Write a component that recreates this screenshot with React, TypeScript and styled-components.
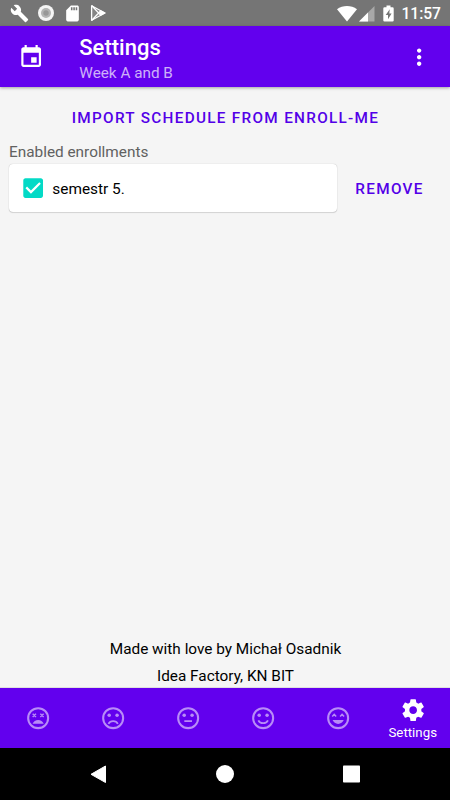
import React from "react";
import styled, { createGlobalStyle } from "styled-components";

const PURPLE = "#6200ee";

const GlobalStyle = createGlobalStyle`
  * { box-sizing: border-box; }
  body { margin: 0; font-family: Roboto, sans-serif; background: #f5f5f5; }
  svg { display: block; flex: none; }
  button { border: 0; background: none; font-family: inherit; padding: 0; }
`;

const Screen = styled.div`
  width: 450px;
  height: 800px;
  display: flex;
  flex-direction: column;
  background: #f5f5f5;
  overflow: hidden;
`;

const StatusBar = styled.div`
  height: 26px;
  flex: none;
  display: flex;
  align-items: center;
  justify-content: space-between;
  background: #757575;
  color: #fff;
  padding: 0 9px 0 10px;
`;

const StatusGroup = styled.div<{ $gap: number }>`
  display: flex;
  align-items: center;
  gap: ${(p) => p.$gap}px;
`;

const Clock = styled.span`
  font-size: 15.6px;
  font-weight: 500;
  line-height: 23px;
  padding: 2px 0 0 2px;
  white-space: nowrap;
`;

const AppBar = styled.header`
  height: 61px;
  flex: none;
  display: flex;
  align-items: center;
  background: ${PURPLE};
  color: #fff;
  padding: 1px 17.5px 0 18px;
  box-shadow: 0 1px 3px rgba(0, 0, 0, 0.35);
  z-index: 1;
`;

const Titles = styled.div`
  flex: 1;
  padding: 3px 0 0 35px;
`;

const Title = styled.h1`
  margin: 0;
  font-size: 22px;
  font-weight: 500;
  line-height: 26px;
`;

const Subtitle = styled.div`
  font-size: 15.3px;
  line-height: 20px;
  padding-top: 2px;
  color: rgba(255, 255, 255, 0.7);
`;

const Content = styled.main`
  flex: 1;
  display: flex;
  flex-direction: column;
  padding: 11px 8px 0 9px;
`;

const TextButton = styled.button<{ $width?: number }>`
  height: 40px;
  width: ${(p) => (p.$width ? `${p.$width}px` : "100%")};
  font-size: 15.3px;
  font-weight: 500;
  letter-spacing: 1.3px;
  color: #5300e8;
  white-space: nowrap;
  text-transform: uppercase;
`;

const SectionLabel = styled.div`
  font-size: 15.35px;
  line-height: 22px;
  margin-top: 3px;
  color: #616161;
`;

const EnrollmentRow = styled.div`
  display: flex;
  align-items: center;
  margin-top: 1px;
`;

const Card = styled.div`
  width: 328px;
  height: 48px;
  display: flex;
  align-items: center;
  gap: 6px;
  padding: 1px 0 0 11px;
  background: #fff;
  border-radius: 4px;
  box-shadow: 0 0 1px rgba(0, 0, 0, 0.3), 0 1px 1px rgba(0, 0, 0, 0.12);
  font-size: 15.4px;
  color: #000;
`;

const RemoveSlot = styled.div`
  padding-top: 2px;
`;

const Credits = styled.footer`
  margin-top: auto;
  margin-bottom: -1px;
  text-align: center;
  font-size: 15.35px;
  line-height: 26.5px;
  color: #000;
`;

const BottomNav = styled.nav`
  height: 60px;
  flex: none;
  display: grid;
  grid-template-columns: repeat(6, 1fr);
  background: ${PURPLE};
  box-shadow: 0 0 1px rgba(0, 0, 0, 0.5);
`;

const NavItem = styled.div<{ $active?: boolean }>`
  display: flex;
  flex-direction: column;
  align-items: center;
  justify-content: center;
  padding: ${(p) => (p.$active ? "3px 0 0 0.5px" : "0 0 0 0.5px")};
  color: ${(p) => (p.$active ? "#fff" : "rgba(255, 255, 255, 0.6)")};
  font-size: 13.3px;
  line-height: 19px;
`;

const SystemBar = styled.div`
  height: 52px;
  flex: none;
  display: flex;
  align-items: center;
  justify-content: space-between;
  padding: 0 86px 0 85px;
  background: #000;
`;

type IconProps = { d: string; size?: number };

const Icon = ({ d, size = 26.3 }: IconProps) => (
  <svg width={size} height={size} viewBox="0 0 24 24" fill="currentColor">
    <path fillRule="evenodd" d={d} />
  </svg>
);

const WRENCH =
  "M22.7 19l-9.1-9.1c.9-2.3.4-5-1.5-6.9-2-2-5-2.4-7.4-1.3L9 6 6 9 1.6 4.7C.4 7.1.9 10.1 2.9 12.1c1.9 1.9 4.6 2.4 6.9 1.5l9.1 9.1c.4.4 1 .4 1.4 0l2.3-2.3c.5-.4.5-1.1.1-1.4z";
const SD_CARD =
  "M18 2h-8L4.02 8 4 20c0 1.1.9 2 2 2h12c1.1 0 2-.9 2-2V4c0-1.1-.9-2-2-2zm-6 6h-2V4h2v4zm3 0h-2V4h2v4zm3 0h-2V4h2v4z";
const EVENT =
  "M17 12h-5v5h5v-5zM16 1v2H8V1H6v2H5c-1.11 0-1.99.9-1.99 2L3 19c0 1.1.89 2 2 2h14c1.1 0 2-.9 2-2V5c0-1.1-.9-2-2-2h-1V1h-2zm3 18H5V8h14v11z";
const MORE =
  "M12 8c1.1 0 2-.9 2-2s-.9-2-2-2-2 .9-2 2 .9 2 2 2zm0 2c-1.1 0-2 .9-2 2s.9 2 2 2 2-.9 2-2-.9-2-2-2zm0 6c-1.1 0-2 .9-2 2s.9 2 2 2 2-.9 2-2-.9-2-2-2z";
const CHECKBOX =
  "M19 3H5c-1.11 0-2 .9-2 2v14c0 1.1.89 2 2 2h14c1.11 0 2-.9 2-2V5c0-1.1-.89-2-2-2zm-9 14l-5-5 1.41-1.41L10 14.17l7.59-7.59L19 8l-9 9z";
const GEAR =
  "M19.43 12.98c.04-.32.07-.64.07-.98s-.03-.66-.07-.98l2.11-1.65c.19-.15.24-.42.12-.64l-2-3.46c-.12-.22-.39-.3-.61-.22l-2.49 1c-.52-.4-1.08-.73-1.69-.98l-.38-2.65C14.46 2.18 14.25 2 14 2h-4c-.25 0-.46.18-.49.42l-.38 2.65c-.61.25-1.17.59-1.69.98l-2.49-1c-.23-.09-.49 0-.61.22l-2 3.46c-.13.22-.07.49.12.64l2.11 1.65c-.04.32-.07.65-.07.98s.03.66.07.98l-2.11 1.65c-.19.15-.24.42-.12.64l2 3.46c.12.22.39.3.61.22l2.49-1c.52.4 1.08.73 1.69.98l.38 2.65c.03.24.24.42.49.42h4c.25 0 .46-.18.49-.42l.38-2.65c.61-.25 1.17-.59 1.69-.98l2.49 1c.23.09.49 0 .61-.22l2-3.46c.12-.22.07-.49-.12-.64l-2.11-1.65zM12 15.5c-1.93 0-3.5-1.57-3.5-3.5s1.57-3.5 3.5-3.5 3.5 1.57 3.5 3.5-1.57 3.5-3.5 3.5z";

const FACE_FILL = "rgba(255,255,255,0.55)";

const Face = ({ children }: { children: React.ReactNode }) => (
  <svg width={26.3} height={26.3} viewBox="0 0 24 24" fill="none" stroke={FACE_FILL}>
    <circle cx="12" cy="12" r="9.1" strokeWidth="1.9" />
    {children}
  </svg>
);

const Eyes = () => (
  <g fill={FACE_FILL} stroke="none">
    <circle cx="8.4" cy="9.4" r="1.6" />
    <circle cx="15.6" cy="9.4" r="1.6" />
  </g>
);

export default function App() {
  return (
    <>
      <GlobalStyle />
      <Screen>
        <StatusBar>
          <StatusGroup $gap={8}>
            <Icon d={WRENCH} size={19} />
            <svg width="18" height="18" viewBox="0 0 18 18">
              <circle cx="9" cy="9" r="8" fill="#f5f5f5" />
              <circle cx="9" cy="9" r="5" fill="#b4b4b4" />
              <circle cx="9" cy="9" r="2.7" fill="#989898" />
            </svg>
            <Icon d={SD_CARD} size={19} />
            <svg width="18" height="18" viewBox="0 0 18 18">
              <path d="M1.6 1.8 15 9 1.6 16.2z" fill="#858585" stroke="#fff" strokeWidth="1.3" strokeLinejoin="round" />
              <path d="M1.6 1.5 11 11.5M1.6 16.5 11 6.5" stroke="#fff" strokeWidth="1.3" />
              <path d="M9 9 11.5 6.4 15.7 9 11.5 11.6z" fill="#fff" />
            </svg>
          </StatusGroup>
          <StatusGroup $gap={2}>
            <svg width="20" height="17" viewBox="0 0 20 17">
              <path d="M0 4.2C5.8-.2 14.2-.2 20 4.2L10 16.5z" fill="#fff" />
            </svg>
            <svg width="16" height="17" viewBox="0 0 16 17">
              <path d="M15.5 1v15.5H0z" fill="#a8a8a8" />
              <path d="M9 7.5v9H0z" fill="#fff" />
            </svg>
            <svg width="20" height="17" viewBox="0.5 0 20 17">
              <path
                fillRule="evenodd"
                d="M10 .5h4v1.7h2q1.2 0 1.2 1.2v12q0 1.1-1.2 1.1H8q-1.2 0-1.2-1.1v-12Q6.8 2.2 8 2.2h2zM13.2 4.3 9.2 10h2.3v4.2l3.6-5.7h-2.3z"
                fill="#fff"
              />
            </svg>
            <Clock>11:57</Clock>
          </StatusGroup>
        </StatusBar>

        <AppBar>
          <Icon d={EVENT} />
          <Titles>
            <Title>Settings</Title>
            <Subtitle>Week A and B</Subtitle>
          </Titles>
          <Icon d={MORE} />
        </AppBar>

        <Content>
          <TextButton>Import schedule from Enroll-me</TextButton>
          <SectionLabel>Enabled enrollments</SectionLabel>
          <EnrollmentRow>
            <Card>
              <svg width="26.3" height="26.3" viewBox="0 0 24 24">
                <path d={CHECKBOX} fill="#03dac6" />
              </svg>
              semestr 5.
            </Card>
            <RemoveSlot>
              <TextButton $width={105}>Remove</TextButton>
            </RemoveSlot>
          </EnrollmentRow>
          <Credits>
            <div>Made with love by Michał Osadnik</div>
            <div>Idea Factory, KN BIT</div>
          </Credits>
        </Content>

        <BottomNav>
          <NavItem>
            <Face>
              <path d="M7 8l3 3M10 8l-3 3M14 8l3 3M17 8l-3 3" strokeWidth="1.3" />
              <path d="M6.9 17.2C7.8 15 9.7 13.8 12 13.8s4.2 1.2 5.1 3.4z" fill={FACE_FILL} stroke="none" />
            </Face>
          </NavItem>
          <NavItem>
            <Face>
              <Eyes />
              <path d="M7.7 17.2C9.5 13.9 14.5 13.9 16.3 17.2" strokeWidth="1.6" />
            </Face>
          </NavItem>
          <NavItem>
            <Face>
              <Eyes />
              <path d="M8.5 14.7h7" strokeWidth="1.6" />
            </Face>
          </NavItem>
          <NavItem>
            <Face>
              <Eyes />
              <path d="M7.6 14C9.3 17.5 14.7 17.5 16.4 14" strokeWidth="1.6" />
            </Face>
          </NavItem>
          <NavItem>
            <Face>
              <path d="M6.6 10.5 8.4 8.6 10.2 10.5M13.8 10.5 15.6 8.6 17.4 10.5" strokeWidth="1.4" />
              <path d="M6.9 13.8h10.2C16.2 16 14.3 17.3 12 17.3S7.8 16 6.9 13.8z" fill={FACE_FILL} stroke="none" />
            </Face>
          </NavItem>
          <NavItem $active>
            <Icon d={GEAR} />
            Settings
          </NavItem>
        </BottomNav>

        <SystemBar>
          <svg width="26" height="26" viewBox="0 0 26 26">
            <path d="M20.5 5v16.5L6 13.3z" fill="#fff" stroke="#fff" strokeLinejoin="round" />
          </svg>
          <svg width="26" height="26" viewBox="0 0 26 26">
            <circle cx="13" cy="13" r="9" fill="#fff" />
          </svg>
          <svg width="26" height="26" viewBox="0 0 26 26">
            <rect x="5" y="4.5" width="17" height="17" rx="0.8" fill="#fff" />
          </svg>
        </SystemBar>
      </Screen>
    </>
  );
}
